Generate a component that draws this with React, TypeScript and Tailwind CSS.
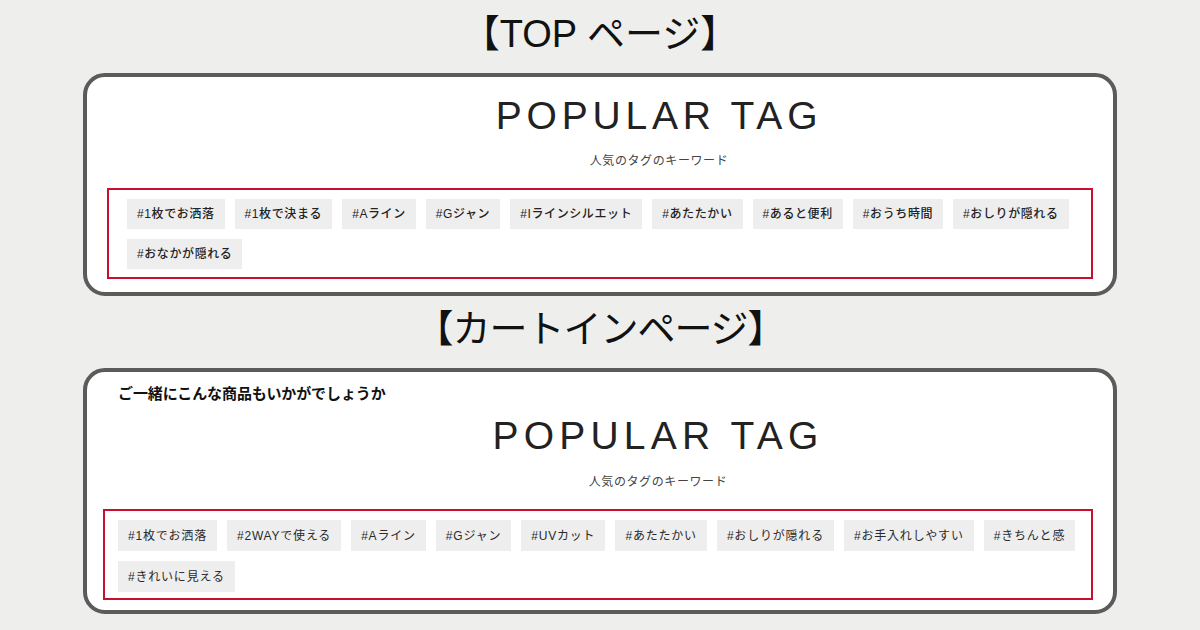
import React from "react";

const topTags = [
  "#1枚でお洒落",
  "#1枚で決まる",
  "#Aライン",
  "#Gジャン",
  "#Iラインシルエット",
  "#あたたかい",
  "#あると便利",
  "#おうち時間",
  "#おしりが隠れる",
  "#おなかが隠れる",
];

const cartTags = [
  "#1枚でお洒落",
  "#2WAYで使える",
  "#Aライン",
  "#Gジャン",
  "#UVカット",
  "#あたたかい",
  "#おしりが隠れる",
  "#お手入れしやすい",
  "#きちんと感",
  "#きれいに見える",
];

const jp = "font-['Liberation_Sans','Noto_Sans_CJK_JP',sans-serif]";

function Tag({ label, tall }: { label: string; tall?: boolean }) {
  return (
    <span
      className={
        "flex items-center bg-[#eeeeee] px-[10px] text-[12px] whitespace-nowrap " +
        (tall ? "h-[31px] tracking-[0.8px] text-[#2a2a2a]" : "h-[30px] tracking-[0.6px] font-medium text-[#222]")
      }
    >
      {label}
    </span>
  );
}

function PopularTags({
  tags,
  lead,
}: {
  tags: string[];
  lead?: string;
}) {
  const cart = Boolean(lead);
  return (
    <section
      className={
        "w-[1034px] rounded-[22px] border-[4px] border-[#5b5b5b] bg-white " +
        (cart ? "pt-[12px] pb-[10px]" : "pt-[19px] pb-[13px]")
      }
    >
      {lead && (
        <p className="pl-[31px] text-[15px] leading-[20px] font-bold tracking-[-0.1px] text-[#111]">
          {lead}
        </p>
      )}

      {/* heading block */}
      <div className={cart ? "mt-[12px] pl-[116px] text-center" : "pl-[118px] text-center"}>
        <h3
          className={
            "font-['Liberation_Sans',sans-serif] text-[39px] leading-[39px] text-[#222] " +
            (cart ? "tracking-[5.2px]" : "tracking-[4.8px]")
          }
        >
          POPULAR TAG
        </h3>
        <p
          className={
            "text-[12px] leading-[18px] tracking-[0.6px] text-[#444] " +
            (cart ? "mt-[18px]" : "mt-[17px]")
          }
        >
          人気のタグのキーワード
        </p>
      </div>

      {/* tag list */}
      <div
        className={
          "mt-[18px] flex flex-wrap gap-x-[10px] gap-y-[10px] border-2 border-[#c8102e] pt-[9px] " +
          (cart ? "ml-[16px] mr-[20px] pl-[13px] pr-[4px] pb-[6px]" : "mx-[20px] pl-[18px] pr-[10px] pb-[8px]")
        }
      >
        {tags.map((t) => (
          <Tag key={t} label={t} tall={cart} />
        ))}
      </div>
    </section>
  );
}

export default function App() {
  return (
    <div className={"flex h-[630px] w-[1200px] flex-col items-center bg-[#eeeeec] text-black " + jp}>
      <h2 className="mt-[12px] h-[44px] text-[38px] leading-[44px] text-[#111]">【TOP ページ】</h2>
      <div className="mt-[17px]">
        <PopularTags tags={topTags} />
      </div>

      <h2 className="mt-[11px] h-[44px] text-[38px] leading-[44px] tracking-[-1px] text-[#111]">【カートインページ】</h2>
      <div className="mt-[17px]">
        <PopularTags tags={cartTags} lead="ご一緒にこんな商品もいかがでしょうか" />
      </div>
    </div>
  );
}
